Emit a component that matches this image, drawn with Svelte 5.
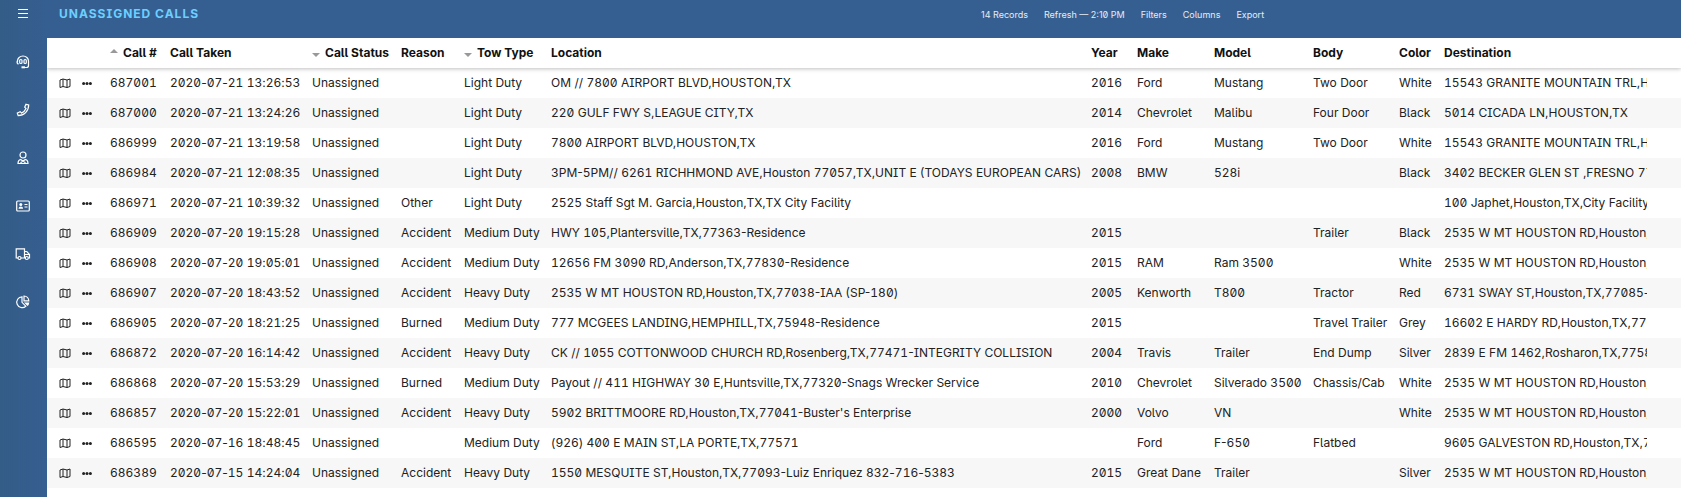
<script>
  const nav = [
    { id: 'dispatch', label: 'Dispatch' },
    { id: 'phone', label: 'Phone calls' },
    { id: 'drivers', label: 'Drivers' },
    { id: 'contacts', label: 'Contacts' },
    { id: 'trucks', label: 'Trucks' },
    { id: 'reports', label: 'Reports' },
  ]

  const columns = [
    { key: 'id', title: 'Call #', sort: 'up' },
    { key: 'taken', title: 'Call Taken' },
    { key: 'status', title: 'Call Status', sort: 'down' },
    { key: 'reason', title: 'Reason' },
    { key: 'tow', title: 'Tow Type', sort: 'down' },
    { key: 'location', title: 'Location' },
    { key: 'year', title: 'Year' },
    { key: 'make', title: 'Make' },
    { key: 'model', title: 'Model' },
    { key: 'body', title: 'Body' },
    { key: 'color', title: 'Color' },
    { key: 'destination', title: 'Destination' },
  ]

  const calls = [
    ['687001', '2020-07-21 13:26:53', 'Unassigned', '', 'Light Duty', 'OM // 7800 AIRPORT BLVD,HOUSTON,TX', '2016', 'Ford', 'Mustang', 'Two Door', 'White', '15543 GRANITE MOUNTAIN TRL,HOUSTON,TX'],
    ['687000', '2020-07-21 13:24:26', 'Unassigned', '', 'Light Duty', '220 GULF FWY S,LEAGUE CITY,TX', '2014', 'Chevrolet', 'Malibu', 'Four Door', 'Black', '5014 CICADA LN,HOUSTON,TX'],
    ['686999', '2020-07-21 13:19:58', 'Unassigned', '', 'Light Duty', '7800 AIRPORT BLVD,HOUSTON,TX', '2016', 'Ford', 'Mustang', 'Two Door', 'White', '15543 GRANITE MOUNTAIN TRL,HOUSTON,TX'],
    ['686984', '2020-07-21 12:08:35', 'Unassigned', '', 'Light Duty', '3PM-5PM// 6261 RICHHMOND AVE,Houston 77057,TX,UNIT E (TODAYS EUROPEAN CARS)', '2008', 'BMW', '528i', '', 'Black', '3402 BECKER GLEN ST ,FRESNO 77545,TX'],
    ['686971', '2020-07-21 10:39:32', 'Unassigned', 'Other', 'Light Duty', '2525 Staff Sgt M. Garcia,Houston,TX,TX City Facility', '', '', '', '', '', '100 Japhet,Houston,TX,City Facility'],
    ['686909', '2020-07-20 19:15:28', 'Unassigned', 'Accident', 'Medium Duty', 'HWY 105,Plantersville,TX,77363-Residence', '2015', '', '', 'Trailer', 'Black', '2535 W MT HOUSTON RD,Houston,TX,77038'],
    ['686908', '2020-07-20 19:05:01', 'Unassigned', 'Accident', 'Medium Duty', '12656 FM 3090 RD,Anderson,TX,77830-Residence', '2015', 'RAM', 'Ram 3500', '', 'White', '2535 W MT HOUSTON RD,Houston,TX,77038'],
    ['686907', '2020-07-20 18:43:52', 'Unassigned', 'Accident', 'Heavy Duty', '2535 W MT HOUSTON RD,Houston,TX,77038-IAA (SP-180)', '2005', 'Kenworth', 'T800', 'Tractor', 'Red', '6731 SWAY ST,Houston,TX,77085-'],
    ['686905', '2020-07-20 18:21:25', 'Unassigned', 'Burned', 'Medium Duty', '777 MCGEES LANDING,HEMPHILL,TX,75948-Residence', '2015', '', '', 'Travel Trailer', 'Grey', '16602 E HARDY RD,Houston,TX,77032'],
    ['686872', '2020-07-20 16:14:42', 'Unassigned', 'Accident', 'Heavy Duty', 'CK // 1055 COTTONWOOD CHURCH RD,Rosenberg,TX,77471-INTEGRITY COLLISION', '2004', 'Travis', 'Trailer', 'End Dump', 'Silver', '2839 E FM 1462,Rosharon,TX,77583'],
    ['686868', '2020-07-20 15:53:29', 'Unassigned', 'Burned', 'Medium Duty', 'Payout // 411 HIGHWAY 30 E,Huntsville,TX,77320-Snags Wrecker Service', '2010', 'Chevrolet', 'Silverado 3500', 'Chassis/Cab', 'White', '2535 W MT HOUSTON RD,Houston,TX,77038'],
    ['686857', '2020-07-20 15:22:01', 'Unassigned', 'Accident', 'Heavy Duty', "5902 BRITTMOORE RD,Houston,TX,77041-Buster's Enterprise", '2000', 'Volvo', 'VN', '', 'White', '2535 W MT HOUSTON RD,Houston,TX,77038'],
    ['686595', '2020-07-16 18:48:45', 'Unassigned', '', 'Medium Duty', '(926) 400 E MAIN ST,LA PORTE,TX,77571', '', 'Ford', 'F-650', 'Flatbed', '', '9605 GALVESTON RD,Houston,TX,77034'],
    ['686389', '2020-07-15 14:24:04', 'Unassigned', 'Accident', 'Heavy Duty', '1550 MESQUITE ST,Houston,TX,77093-Luiz Enriquez 832-716-5383', '2015', 'Great Dane', 'Trailer', '', 'Silver', '2535 W MT HOUSTON RD,Houston,TX,77038'],
  ]

  // odd parts are the digit runs; only those get tabular figures
  const splitDigits = (text) => text.split(/(\d+)/)
</script>

<div class="app">
  <nav class="sidebar" aria-label="Main">
    <button class="nav-item menu" aria-label="Menu">
      <svg width="12" height="11" viewBox="0 0 12 11"><path d="M1 1.500h10M1 5.500h10M1 9.500h10" /></svg>
    </button>
    {#each nav as item (item.id)}
      <button class="nav-item" aria-label={item.label}>
        <svg width="16" height="16" viewBox="0 0 16 16">
          {#if item.id === 'dispatch'}
            <path d="M2.500 8V7a5.500 5 0 0 1 11 0v4.500q0 2-2 2H9M2.500 6.500Q1.300 9 3.500 10.300" />
            <rect x="4.700" y="5.500" width="2.300" height="4" rx="1" />
            <rect x="9" y="5.500" width="2.300" height="4" rx="1" />
            <path d="M6.500 13.300h3.500" stroke-width="2" />
          {:else if item.id === 'phone'}
            <path d="M11 2.300l2.700.7C13.700 9 9 13.700 3.200 13.700L2.300 11l2.900-1.300 1.300 1.400Q9.700 9.500 11 6.500L9.700 5.200z" />
          {:else if item.id === 'drivers'}
            <circle cx="8" cy="5" r="3" />
            <path d="M5.500 9.500Q3 10 3 13.500h10q0-3.500-2.500-4L8 11zM5.500 12.700L8 11l2.500 1.700" />
          {:else if item.id === 'contacts'}
            <rect x="1.700" y="3" width="12.600" height="10" rx="1" />
            <circle class="solid" cx="5.800" cy="6.500" r="1.500" />
            <path class="solid" d="M3.500 10.800q0-2.300 2.300-2.300t2.300 2.300z" />
            <path d="M9.500 6.500h3M9.500 9h3" />
          {:else if item.id === 'trucks'}
            <path d="M3 12H1.200V2.800h8.300V12H6M9.500 5.500h2.300l2.700 3V12h-1M9.500 12h.5M9.500 8.500h5" />
            <circle cx="4.500" cy="12" r="1.500" />
            <circle cx="11.800" cy="12" r="1.500" />
          {:else}
            <path d="M7 2.800a5.400 5.400 0 1 0 3.800 9.400L7 8.300zM9 2v4.800h4.800A5 5 0 0 0 9 2z" />
            <path class="solid" d="M9 8.500h5.300q-.2 2.300-1.800 3.600z" />
          {/if}
        </svg>
      </button>
    {/each}
  </nav>

  <div class="page">
    <header class="topbar">
      <h1>Unassigned Calls</h1>
      <div class="actions">
        <span>14 Records</span>
        <button>Refresh — 2:10 PM</button>
        <button>Filters</button>
        <button>Columns</button>
        <button>Export</button>
      </div>
    </header>

    <main>
      <table>
        <colgroup>
          <col class="col-tools" />
          {#each columns as column (column.key)}
            <col class="col-{column.key}" />
          {/each}
        </colgroup>
        <thead>
          <tr>
            <td></td>
            {#each columns as column (column.key)}
              <th scope="col">
                {#if column.sort}<span class="sort {column.sort}"></span>{/if}{column.title}
              </th>
            {/each}
          </tr>
        </thead>
        <tbody>
          {#each calls as call (call[0])}
            <tr>
              <td>
                <div class="tools">
                  <button aria-label="Show {call[0]} on map">
                    <svg width="12" height="12" viewBox="0 0 12 12"><path d="M1 3l3-1 4 1 3-1v7.500l-3 1-4-1-3 1zM4 2v7.500M8 3v7.500" /></svg>
                  </button>
                  <button aria-label="More for {call[0]}">
                    <svg width="10" height="12" viewBox="0 0 10 12"><g class="dots"><circle cx="1.600" cy="6.500" r="1.500" /><circle cx="5" cy="6.500" r="1.500" /><circle cx="8.400" cy="6.500" r="1.500" /></g></svg>
                  </button>
                </div>
              </td>
              {#each call as value}
                <td><div class="value">{#each splitDigits(value) as part, i}{#if i % 2}<span class="num">{part}</span>{:else}{part}{/if}{/each}</div></td>
              {/each}
            </tr>
          {/each}
        </tbody>
      </table>
    </main>
  </div>
</div>

<style>
  :global(body) {
    margin: 0;
    overflow: hidden;
    background: #fff;
  }

  .app {
    display: flex;
    min-height: 100vh;
    font-family: Inter, 'Liberation Sans', sans-serif;
    font-size: 12px;
    color: #111;
    background: #365f91;
    font-feature-settings: 'zero', 'cv05', 'cv08';
  }

  button {
    display: flex;
    align-items: center;
    justify-content: center;
    padding: 0;
    border: 0;
    background: none;
    color: inherit;
    font: inherit;
    font-feature-settings: inherit;
    cursor: pointer;
  }

  svg {
    fill: none;
    stroke: currentColor;
  }

  .sidebar {
    flex: none;
    width: 47px;
    color: #fff;
    background: linear-gradient(to right, #335c87, #365f91);
  }

  .nav-item {
    width: 46px;
    height: 48px;
  }
  .nav-item.menu {
    height: 27px;
    margin-bottom: 11px;
  }
  .nav-item svg { stroke-width: 1.2; }
  .solid {
    fill: currentColor;
    stroke: none;
  }

  .page {
    flex: 1;
    min-width: 0;
  }

  .topbar {
    display: grid;
    grid-template-columns: 934px 1fr;
    height: 38px;
    color: #fff;
  }

  h1 {
    margin: 0;
    padding-left: 12px;
    font-size: 12px;
    line-height: 28px;
    font-weight: 700;
    letter-spacing: 1px;
    text-transform: uppercase;
    color: #6ccfff;
  }

  .actions {
    display: flex;
    gap: 16px;
    height: 28px;
    align-items: center;
    font-size: 9px;
    color: #e6ecf3;
  }

  main {
    overflow: hidden;
    min-height: calc(100vh - 38px);
    background: #fff;
  }

  table {
    width: 100%;
    table-layout: fixed;
    border-collapse: separate;
    border-spacing: 0;
  }

  .col-tools { width: 57px; }
  .col-id { width: 60px; }
  .col-taken { width: 142px; }
  .col-status { width: 89px; }
  .col-reason { width: 63px; }
  .col-tow { width: 87px; }
  .col-location { width: 540px; }
  .col-year { width: 46px; }
  .col-make { width: 77px; }
  .col-model { width: 99px; }
  .col-body { width: 86px; }
  .col-color { width: 45px; }

  th,
  td {
    height: 30px;
    padding: 0 6px;
    line-height: 30px;
    text-align: left;
    white-space: nowrap;
  }
  td:last-child { padding-right: 34px; }

  thead {
    position: relative;
    box-shadow: 0 1px 4px rgba(0, 0, 0, 0.25);
  }
  th { font-weight: 700; }

  tbody { color: #222; }
  tbody tr:nth-child(even) { background: #f7f7f7; }

  td:last-child .value { overflow: hidden; }
  .num { font-feature-settings: 'tnum', 'zero'; }

  .sort {
    display: inline-block;
    margin-right: 5px;
    border: 4px solid transparent;
  }
  .sort.up {
    border-bottom-color: #999;
    border-top: 0;
    vertical-align: 4px;
  }
  .sort.down {
    border-top-color: #999;
    border-bottom: 0;
  }

  .tools {
    display: flex;
    gap: 11px;
    padding-left: 6px;
  }
  .dots {
    fill: currentColor;
    stroke: none;
  }
</style>
